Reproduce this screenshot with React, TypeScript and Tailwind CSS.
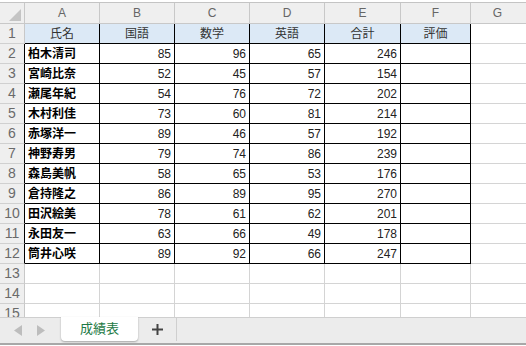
import React from "react"

const COLS = [
  { id: "A", w: "w-[75px]" },
  { id: "B", w: "w-[75px]" },
  { id: "C", w: "w-[75px]" },
  { id: "D", w: "w-[75px]" },
  { id: "E", w: "w-[76px]" },
  { id: "F", w: "w-[70px]" },
]

const HEAD = ["氏名", "国語", "数学", "英語", "合計", "評価"]

const ROWS: [string, number, number, number, number][] = [
  ["柏木清司", 85, 96, 65, 246],
  ["宮崎比奈", 52, 45, 57, 154],
  ["瀬尾年紀", 54, 76, 72, 202],
  ["木村利佳", 73, 60, 81, 214],
  ["赤塚洋一", 89, 46, 57, 192],
  ["神野寿男", 79, 74, 86, 239],
  ["森島美帆", 58, 65, 53, 176],
  ["倉持隆之", 86, 89, 95, 270],
  ["田沢絵美", 78, 61, 62, 201],
  ["永田友一", 63, 66, 49, 178],
  ["筒井心咲", 89, 92, 66, 247],
]

const font = "font-['Liberation_Sans','Noto_Sans_CJK_JP',sans-serif]"

function RowHead({ n, dark }: { n: number; dark?: boolean }) {
  return (
    <div
      className={
        "w-[25px] shrink-0 h-full flex items-center justify-center bg-[#efefef] border-b border-[#d0d0d0] border-r text-[14px] text-[#6a6a6a] " +
        (dark ? "border-r-black" : "border-r-[#c8c8c8]")
      }
    >
      {n}
    </div>
  )
}

export default function App() {
  return (
    <div className={"w-[526px] h-[346px] flex flex-col bg-white overflow-hidden " + font}>
      <div className="flex-1 overflow-hidden pt-[2px]">
        {/* column letters */}
        <div className="flex h-[22px] border-t border-[#c4c4c4]">
          <div className="w-[25px] shrink-0 bg-[#efefef] border-r border-b border-[#c8c8c8] flex items-end justify-end">
            <svg width="24" height="20" viewBox="0 0 24 20">
              <polygon points="9,18 21,18 21,6" fill="#c4c4c4" />
            </svg>
          </div>
          {COLS.map(c => (
            <div
              key={c.id}
              className={c.w + " shrink-0 bg-[#efefef] border-r border-b border-[#c8c8c8] flex items-center justify-center text-[12px] text-[#666]"}
            >
              {c.id}
            </div>
          ))}
          <div className="flex-1 bg-[#efefef] border-b border-[#c8c8c8] flex items-center justify-center text-[12px] text-[#666] pr-[2px]">
            G
          </div>
        </div>

        {/* row 1 */}
        <div className="flex h-[20px]">
          <RowHead n={1} />
          {HEAD.map((h, i) => (
            <div
              key={h}
              className={COLS[i].w + " shrink-0 bg-[#dce9f6] border-r border-b border-black flex items-center justify-center text-[12px] text-[#333]"}
            >
              {h}
            </div>
          ))}
          <div className="flex-1 border-b border-[#d4d4d4]" />
        </div>

        {/* data rows */}
        {ROWS.map((r, ri) => (
          <div key={r[0]} className="flex h-[20px]">
            <RowHead n={ri + 2} dark />
            <div className={COLS[0].w + " shrink-0 border-r border-b border-black flex items-center pl-[3px] text-[12px] font-bold text-black"}>
              {r[0]}
            </div>
            {r.slice(1).map((v, vi) => (
              <div
                key={vi}
                className={COLS[vi + 1].w + " shrink-0 border-r border-b border-black flex items-center justify-end pr-[3px] text-[12px] text-[#222]"}
              >
                {v}
              </div>
            ))}
            <div className={COLS[5].w + " shrink-0 border-r border-b border-black"} />
            <div className="flex-1 border-b border-[#d4d4d4]" />
          </div>
        ))}

        {/* empty rows */}
        {[13, 14, 15].map(n => (
          <div key={n} className="flex h-[20px]">
            <RowHead n={n} />
            {COLS.map(c => (
              <div key={c.id} className={c.w + " shrink-0 border-r border-b border-[#d4d4d4]"} />
            ))}
            <div className="flex-1 border-b border-[#d4d4d4]" />
          </div>
        ))}
      </div>

      {/* sheet tabs */}
      <div className="h-[26px] shrink-0 flex bg-[#ececec] border-t border-[#cfcfcf]">
        <div className="w-[61px] shrink-0 flex items-center gap-[13px] pl-[14px]">
          <svg width="9" height="11" viewBox="0 0 9 11">
            <polygon points="8,0 8,11 0,5.5" fill="#bdbdbd" />
          </svg>
          <svg width="9" height="11" viewBox="0 0 9 11">
            <polygon points="1,0 1,11 9,5.5" fill="#bdbdbd" />
          </svg>
        </div>
        <div className="w-[77px] shrink-0 h-[24px] -mt-px bg-white rounded-b-[4px] shadow-[0_1px_2px_rgba(0,0,0,0.3)] flex items-center justify-center text-[13px] text-[#1d7a45]">
          成績表
        </div>
        <div className="w-[39px] shrink-0 h-[23px] border-r border-[#cfcfcf] flex items-center justify-center">
          <svg width="11" height="11" viewBox="0 0 11 11">
            <rect x="4.5" y="0" width="2" height="11" fill="#444" />
            <rect x="0" y="4.5" width="11" height="2" fill="#444" />
          </svg>
        </div>
        <div className="flex-1" />
      </div>
      <div className="h-[3px] shrink-0 border-t-2 border-[#a8a8a8] bg-white" />
    </div>
  )
}
